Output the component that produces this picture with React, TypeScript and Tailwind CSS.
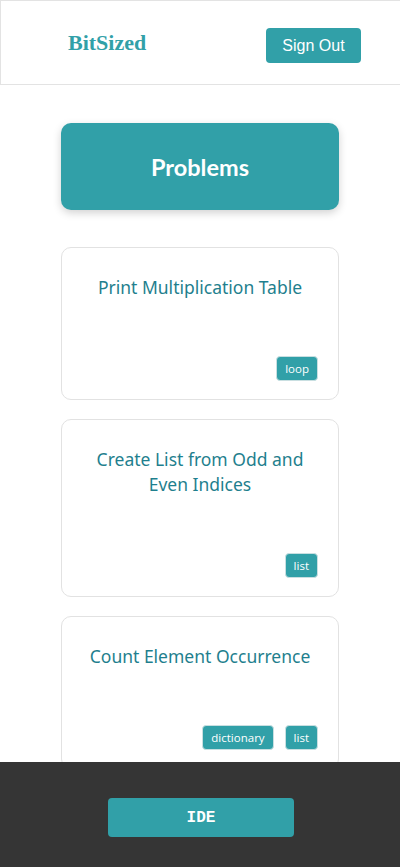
import React from "react";

const problems = [
  { title: "Print Multiplication Table", tags: ["loop"] },
  { title: "Create List from Odd and Even Indices", tags: ["list"] },
  { title: "Count Element Occurrence", tags: ["dictionary", "list"] },
];

export default function App() {
  return (
    <div className="min-h-screen bg-white font-['Open_Sans',sans-serif]">
      <header className="h-[85px] border-t border-l border-b border-[#e3e3e3] flex items-center justify-between pl-[67px] pr-[39px]">
        <div className="text-[22px] font-bold text-[#31a0a8] leading-none font-['Liberation_Serif',serif] mt-[1px]">
          BitSized
        </div>
        <button className="w-[95px] h-[35px] mt-[6px] rounded-[4px] bg-[#31a0a8] text-white text-[16px] flex items-center justify-center font-['Liberation_Sans',Arial,sans-serif]">
          Sign Out
        </button>
      </header>

      <main className="w-[278px] mx-auto pt-[38px] pb-[120px] flex flex-col gap-[19px]">
        <div className="h-[87px] rounded-[10px] bg-[#31a0a8] shadow-[0_3px_8px_rgba(0,0,0,0.18)] flex items-center justify-center mb-[18px]">
          <span className="text-white text-[23.5px] font-bold font-['Lato',sans-serif] mt-[2px]">Problems</span>
        </div>

        {problems.map((p) => (
          <div key={p.title} className="rounded-[10px] border border-[#e2e2e2] bg-white pt-[27px] pb-[18px] pl-[20px] pr-[20px] flex flex-col">
            <div className="text-center text-[17.5px] leading-[25px] text-[#1f7f8e] font-['Noto_Sans',sans-serif]">
              {p.title}
            </div>
            <div className="flex justify-end gap-[11px] mt-[56px]">
              {p.tags.map((t) => (
                <span
                  key={t}
                  className="h-[25px] px-[8px] rounded-[4px] bg-[#31a0a8] border border-[#c9dfe1] text-white text-[11.5px] flex items-center font-['Open_Sans',sans-serif]"
                >
                  {t}
                </span>
              ))}
            </div>
          </div>
        ))}
      </main>

      <footer className="fixed bottom-0 left-0 right-0 h-[105px] bg-[#353535] flex justify-center pt-[36px]">
        <button className="w-[186px] h-[39px] rounded-[4px] bg-[#31a0a8] text-white text-[16px] font-bold ml-[2px] font-['Liberation_Mono','Courier_New',monospace]">
          IDE
        </button>
      </footer>
    </div>
  );
}
